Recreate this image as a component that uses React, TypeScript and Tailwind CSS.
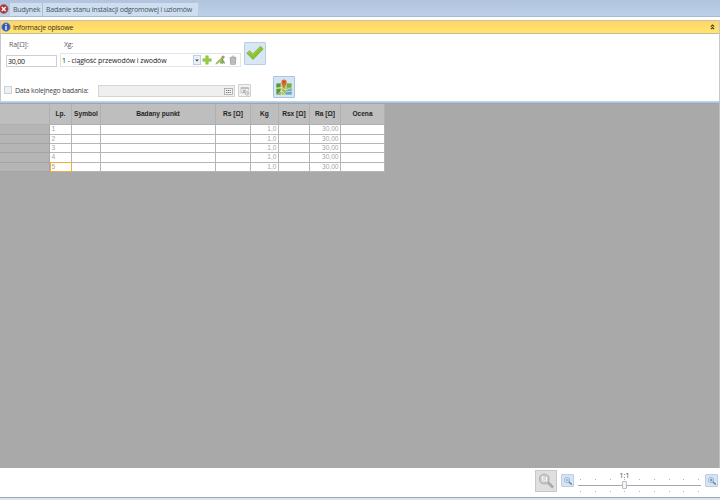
import type { ReactNode } from 'react';

const columns = [
  { label: '', width: 'w-[50px]' },
  { label: 'Lp.', width: 'w-[22px]' },
  { label: 'Symbol', width: 'w-[29px]' },
  { label: 'Badany punkt', width: 'w-[115px]' },
  { label: 'Rs [Ω]', width: 'w-[35px]' },
  { label: 'Kg', width: 'w-[28px]' },
  { label: 'Rsx [Ω]', width: 'w-[31px]' },
  { label: 'Ra [Ω]', width: 'w-[31px]' },
  { label: 'Ocena', width: 'w-[44px]' },
];

const rows = ['1', '2', '3', '4', '5'].map((n) => ['', n, '', '', '', '1,0', '', '30,00', '']);
const rowHeights = ['h-[10px]', 'h-[9px]', 'h-[9px]', 'h-[10px]', 'h-[9px]'];

function CloseIcon() {
  return (
    <svg width="9" height="10" viewBox="0 0 9 10" className="shrink-0">
      <circle cx="3.7" cy="5" r="4.4" fill="#b3363d" stroke="#8b5660" strokeWidth=".6" />
      <path d="M1.8 3.1l3.8 3.8M5.6 3.1L1.8 6.9" stroke="#fff" strokeWidth="1.4" />
    </svg>
  );
}

function InfoIcon() {
  return (
    <svg width="10" height="10" viewBox="0 0 10 10" className="shrink-0">
      <circle cx="5" cy="5" r="4.3" fill="#3458b8" stroke="#8a93ad" strokeWidth=".8" />
      <path d="M5 4.1v3.8" stroke="#fff" strokeWidth="1.4" fill="none" />
      <circle cx="5" cy="2.5" r=".8" fill="#fff" />
    </svg>
  );
}

function PlusIcon() {
  return (
    <svg width="10" height="10" viewBox="0 0 10 10" className="shrink-0">
      <path d="M3.7.8h2.6v2.9h2.9v2.6H6.3v2.9H3.7V6.3H.8V3.7h2.9z" fill="#97cc42" stroke="#7eb740" strokeWidth=".5" />
    </svg>
  );
}

function EditIcon() {
  return (
    <svg width="11" height="10" viewBox="0 0 11 10" className="shrink-0">
      <path d="M5 9c0-2.600.9-4.300 2.400-4.300S9.900 6.300 9.900 9L8.600 8.300 7.200 9 6 8.200z" fill="#84b062" />
      <path d="M.8 9.200L1.700 7 7 2.400l1.400 1.500L3 8.300z" fill="#a9c65f" stroke="#7d9e55" strokeWidth=".4" />
      <circle cx="8.100" cy="2.100" r="1.600" fill="#c0935b" />
      <path d="M6.200 3.400l1.600 1.700" stroke="#5d8047" strokeWidth=".8" />
    </svg>
  );
}

function TrashIcon() {
  return (
    <svg width="8" height="10" viewBox="0 0 8 10" className="shrink-0">
      <path d="M1.200 3h5.600l-.5 6.300H1.700z" fill="#d6d6d6" stroke="#8d8d8d" strokeWidth=".7" />
      <path d="M.8 2.300h6.400M2.800 1.200h2.400M3 4v4.300M5 4v4.300" stroke="#828282" strokeWidth=".6" />
    </svg>
  );
}

function CheckIcon() {
  return (
    <svg width="20" height="20" viewBox="0 0 20 20">
      <path d="M1.800 9.300l2.700-2.500 3.400 3.200 7.400-7.700 2.900 2.600L8.100 15.500z" fill="#88c52b" stroke="#75a93c" strokeWidth=".7" strokeLinejoin="round" />
      <path d="M3.100 9.200l1.400-1.300 3.400 3.200 7.300-7.600" stroke="#a7d558" strokeWidth=".8" fill="none" />
    </svg>
  );
}

function MapIcon() {
  return (
    <svg width="18" height="18" viewBox="0 0 18 18">
      <path d="M1.500 5.500h15V16.500h-15z" fill="#9bc357" />
      <path d="M1.500 5.500h4.200v4H1.500zM1.500 11h4v5.500h-4z" fill="#579548" />
      <path d="M11.500 5.500h5v4h-5z" fill="#75ac4c" />
      <path d="M10.500 11.500l6-1.500v6.500h-6z" fill="#5fa5cf" />
      <path d="M1.500 10.300l5-1 4.200 3 5.800-2.500M6.300 5.500v11M11 5.500v6.500M3 16.500l3.500-4 4 4M10.500 14l6-1" stroke="#ece9b5" strokeWidth=".8" fill="none" />
      <path d="M9 11C8.700 8.300 6.300 6.900 6.300 4.100a2.700 2.700 0 015.400 0C11.700 6.900 9.300 8.300 9 11z" fill="#df6b30" />
      <circle cx="9" cy="4" r="1.100" fill="#9f5934" />
    </svg>
  );
}

function KeyboardIcon() {
  return (
    <svg width="9" height="7" viewBox="0 0 9 7" className="shrink-0">
      <rect x=".5" y=".5" width="8" height="6" fill="#f2f2f2" stroke="#a5a5a5" strokeWidth=".8" />
      <path d="M2 2.500h5M2 4.500h5" stroke="#6e6e6e" strokeWidth=".9" strokeDasharray="1.200 .6" />
    </svg>
  );
}

function CalendarIcon() {
  return (
    <svg width="10" height="10" viewBox="0 0 10 10">
      <path d="M1 1.500h7.500v3M1 1.500v5.500h2" stroke="#bbb" strokeWidth=".8" fill="none" />
      <path d="M1 2.300h7.500" stroke="#b5b5b5" strokeWidth="1" />
      <path d="M3.400 7V4.200h2.200L3.700 6l2.200 1.500" stroke="#999" strokeWidth=".8" fill="none" />
      <circle cx="7.100" cy="7.300" r="1.800" fill="#eee" stroke="#aaa" strokeWidth=".8" />
      <path d="M7 6.300v1.200h1" stroke="#999" strokeWidth=".5" fill="none" />
    </svg>
  );
}

function ZoomIcon({ sign }: { sign: string }) {
  return (
    <svg width="10" height="10" viewBox="0 0 10 10">
      <circle cx="4" cy="4" r="2.500" fill="#e4f0fb" stroke="#8baccb" strokeWidth=".9" />
      <path d="M5.900 5.900l2.900 2.600" stroke="#687d92" strokeWidth="1.400" />
      <path d={sign} stroke="#4d6b89" strokeWidth=".8" />
    </svg>
  );
}

function ZoomButton({ children }: { children: ReactNode }) {
  return (
    <div className="flex h-[13px] w-[13px] shrink-0 items-center justify-center rounded-[1px] border border-[#bdd0e3] bg-[#d5e4f4]">
      {children}
    </div>
  );
}

function TickRow() {
  return (
    <div className="ml-[2px] flex h-px w-[119px] justify-between">
      {[0, 1, 2, 3, 4, 5, 6, 7, 8].map((n) => (
        <span key={n} className="h-px w-px bg-[#b5b5b5]" />
      ))}
    </div>
  );
}

export default function App() {
  return (
    <div className="flex h-[500px] w-[720px] flex-col overflow-hidden bg-white font-['Open_Sans','Noto_Sans',sans-serif] text-[7px] leading-none tracking-[-0.2px] whitespace-nowrap text-[#4c4c4c]">
      <header className="flex h-[17px] shrink-0 items-end border-b border-[#a9bacd] bg-linear-to-b from-[#b1c3dd] to-[#bdd0e9]">
        <div className="flex h-[14px] items-center"><CloseIcon /></div>
        <div className="ml-px flex h-[13px] w-[33px] items-center border-r border-[#aabfd9] bg-[#cfdeef] pl-[3px] text-[#3f5369]">Budynek</div>
        <div className="flex h-[13px] w-[156px] items-center border-r border-[#bacce2] bg-[#cfdeef] pl-[3px] text-[#3f5369]">Badanie stanu instalacji odgromowej i uziomów</div>
      </header>

      <section className="mt-[3px] flex h-[81px] shrink-0 flex-col border-r border-l border-[#c5c9ce]">
        <div className="flex h-[14px] shrink-0 items-center border-t border-b border-t-[#c4c4b5] border-b-[#c4bb99] bg-linear-to-b from-[#ffd568] to-[#ffe66f] text-[#383018]">
          <InfoIcon />
          <span className="ml-[2px] tracking-[-0.22px]">Informacje opisowe</span>
          <svg className="mr-[4px] ml-auto" width="5" height="6" viewBox="0 0 5 6">
            <path d="M.8 2.600L2.500 1l1.700 1.600M.8 5.200l1.700-1.600 1.700 1.600" fill="none" stroke="#493e26" strokeWidth="1.100" />
          </svg>
        </div>
        <div className="flex h-[40px] shrink-0 pl-[5px]">
          <div className="w-[51px] pt-[7px]">
            <div className="h-[14px] pl-[3px] tracking-[-0.1px] text-[#5c5c5c]">Ra[Ω]:</div>
            <div className="flex h-[12px] items-center border border-[#cad0d6] bg-white pl-px text-[#111]">30,00</div>
          </div>
          <div className="ml-[3px] w-[181px] pt-[7px]">
            <div className="h-[12px] pl-[4px] text-[#5c5c5c]">Xg:</div>
            <div className="flex h-[14px] items-center border border-[#e2e4e7]">
              <div className="flex h-[12px] w-[140px] items-center justify-between bg-white pl-px text-[#1c1c1c]">
                <span className="tracking-[-0.09px]">1 - ciągłość przewodów i zwodów</span>
                <div className="flex h-[10px] w-[8px] items-center justify-center border border-[#bfcfdf] bg-[#e9f0f7]">
                  <svg width="4" height="3" viewBox="0 0 4 3"><path d="M.2.4h3.600L2 2.600z" fill="#333" /></svg>
                </div>
              </div>
              <div className="ml-px flex items-center">
                <PlusIcon />
                <span className="ml-[3px] flex"><EditIcon /></span>
                <span className="ml-[3px] flex"><TrashIcon /></span>
              </div>
            </div>
          </div>
          <div className="mt-[8px] ml-[3px] flex h-[23px] w-[22px] items-center justify-center rounded-[1px] border border-[#b9cee4] bg-[#d9e6f4]"><CheckIcon /></div>
        </div>
        <div className="flex h-[27px] shrink-0 pl-[3px]">
          <div className="mt-[12px] h-[8px] w-[8px] border border-[#cdd1d5] bg-[#eff0f2]" />
          <span className="mt-[13px] ml-[3px] w-[80px] tracking-[-0.23px] text-[#404447]">Data kolejnego badania:</span>
          <div className="mt-[11px] ml-[3px] flex h-[12px] w-[137px] items-center justify-end border border-[#d4d4d4] bg-[#efefef] pr-px">
            <KeyboardIcon />
          </div>
          <div className="mt-[10px] ml-[3px] flex h-[13px] w-[13px] items-center justify-center rounded-[1px] border border-[#cfcfcf] bg-[#f1f1f1]"><CalendarIcon /></div>
          <div className="mt-[2px] ml-[22px] flex h-[22px] w-[22px] items-center justify-center rounded-[1px] border border-[#a9c4e1] bg-[#d6e5f6]"><MapIcon /></div>
        </div>
      </section>

      <main className="h-[367px] shrink-0 border-r border-r-[#c0c0c0] bg-[#a9a9a9]">
        <div className="h-px bg-[#c5d3e3]" />
        <div className="h-px bg-[#b1c4d9]" />
        <div className="h-px bg-[#93a9bd]" />
        <div className="w-[385px] font-['Liberation_Sans',Arial,sans-serif] tracking-normal">
          <div className="flex h-[20px] bg-[#bebebe] text-[6.6px] font-bold text-[#252525]">
            {columns.map((column, i) => (
              <div key={i} className={`${column.width} flex shrink-0 items-center justify-center border-r border-[#b0b0b0] pt-px`}>{column.label}</div>
            ))}
          </div>
          <div className="h-px bg-[#b0b0b0]" />
          {rows.map((row, r) => (
            <div key={r} className={`${rowHeights[r]} flex text-[6.6px] text-[#a5a5a5]`}>
              {row.map((value, c) => {
                const active = r === 4 && c === 1;
                return (
                  <div
                    key={c}
                    className={`${columns[c].width} flex shrink-0 items-center border-r border-b px-[1.5px] ${active ? 'relative z-10' : ''} ${c === 0 ? 'border-[#a5a5a5] bg-[#b5b5b5]' : 'border-[#b5b5b5] bg-white'} ${c > 1 ? 'justify-end' : ''}`}
                  >
                    {value}
                    {active && <span className="absolute top-[-1px] left-0 h-[10px] w-[22px] border border-[#f0ab45]" />}
                  </div>
                );
              })}
            </div>
          ))}
        </div>
      </main>

      <footer className="flex h-[29px] shrink-0 items-start justify-end pr-[2px]">
        <div className="mt-[2px] flex h-[22px] w-[22px] items-center justify-center border border-[#c8c8c8] bg-[#dfdfdf]">
          <svg width="18" height="18" viewBox="0 0 18 18">
            <circle cx="7.300" cy="7" r="4.700" fill="#cecece" stroke="#b8b8b8" strokeWidth="1.600" />
            <path d="M11 10.500l5.100 5" stroke="#aaa" strokeWidth="2.500" />
            <path d="M4.800 5.600l1-.8v4.600M9.400 4.800v4.600M7.600 5.800v1M7.600 7.900v1" stroke="#fafafa" strokeWidth="1.100" fill="none" />
          </svg>
        </div>
        <div className="mt-[6px] ml-[4px]"><ZoomButton><ZoomIcon sign="M3 4h2.400" /></ZoomButton></div>
        <div className="ml-[4px] flex h-[28px] w-[123px] flex-col pt-[4px]">
          <div className="h-[7px] w-[93px] text-center text-[7px] tracking-normal text-[#444]">1:1</div>
          <TickRow />
          <div className="mt-[1px] flex h-[8px] w-full items-center">
            <div className="h-px w-[44px] bg-[#a2a8ad]" />
            <div className="h-[8px] w-[5px] rounded-[1px] border border-[#b5bec6] bg-[#f3f5f6]" />
            <div className="h-px flex-1 bg-[#a2a8ad]" />
          </div>
          <div className="mt-[2px]"><TickRow /></div>
        </div>
        <div className="mt-[6px] ml-[4px]"><ZoomButton><ZoomIcon sign="M3 4h2.400M4.200 2.800v2.400" /></ZoomButton></div>
      </footer>
      <div className="h-[3px] shrink-0 border-t border-[#9ba9b5] bg-[#dce6ef]" />
    </div>
  );
}
